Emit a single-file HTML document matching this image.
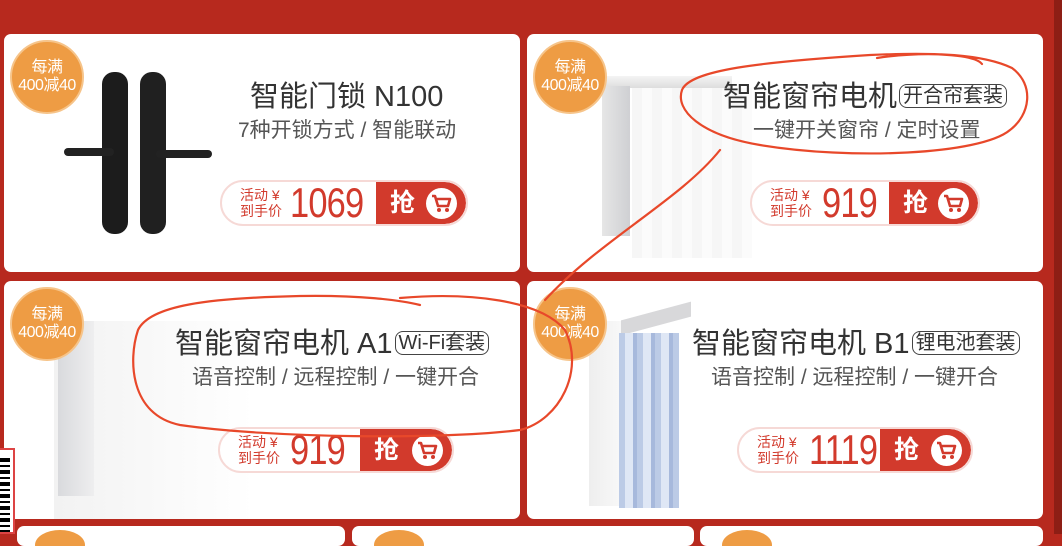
<!DOCTYPE html>
<html><head><meta charset="utf-8"><style>
*{margin:0;padding:0;box-sizing:border-box}
html,body{width:1062px;height:534px}
body{background:#b7291e;position:relative;overflow:hidden;font-family:"Liberation Sans","Noto Sans CJK SC",sans-serif}
.card{position:absolute;background:#fff;border-radius:7px;overflow:hidden}
.badge{position:absolute;width:74px;height:74px;border-radius:50%;background:#ee9c44;color:#fff;text-align:center;font-size:16px;line-height:18px;padding-top:17px;border:2px solid #f6c48a;letter-spacing:-0.5px}
.t{position:absolute;color:#333;font-size:29px;white-space:nowrap;line-height:34px}
.tag{display:inline-block;border:1.5px solid #444;border-radius:8px;font-size:20px;line-height:22px;padding:0 3px;vertical-align:4px;margin-left:2px}
.s{position:absolute;color:#555;font-size:21px;white-space:nowrap;line-height:26px}
.pill{position:absolute;height:46px;border:2px solid #f6d9d6;border-radius:23px;background:#fff;overflow:hidden}
.pill .lab{position:absolute;left:18px;top:5px;color:#d23a2c;font-size:14px;line-height:16px}
.pill .num{position:absolute;top:-1px;color:#d23a2c;font-size:42px;line-height:44px;transform:scaleX(0.82);transform-origin:left;letter-spacing:-1px}
.pill .red{position:absolute;top:0;right:0;bottom:0;background:#d23a2c;border-radius:0 23px 23px 0}
.pill .q{position:absolute;left:14px;top:5px;color:#fff;font-size:25px;font-weight:bold;line-height:32px}
.pill .cart{position:absolute;top:6px;width:31px;height:31px;border-radius:50%;background:#fff}
.cart svg{position:absolute;left:5px;top:6px}
</style></head><body>

<!-- card1 -->
<div class="card" style="left:4px;top:34px;width:516px;height:238px">
 <div style="position:absolute;left:98px;top:38px;width:26px;height:162px;background:#1c1c1c;border-radius:12px"></div>
 <div style="position:absolute;left:60px;top:114px;width:50px;height:8px;background:#222;border-radius:4px"></div>
 <div style="position:absolute;left:136px;top:38px;width:26px;height:162px;background:#202020;border-radius:12px"></div>
 <div style="position:absolute;left:152px;top:116px;width:56px;height:8px;background:#222;border-radius:4px"></div>
 <div class="badge" style="left:6px;top:6px">每满<br>400减40</div>
 <div class="t" style="left:246px;top:46px">智能门锁 N100</div>
 <div class="s" style="left:234px;top:84px">7种开锁方式 / 智能联动</div>
</div>
<div class="pill" style="left:220px;top:180px;width:248px">
 <div class="lab">活动 ¥<br>到手价</div><div class="num" style="left:68px">1069</div>
 <div class="red" style="width:90px"><div class="q">抢</div><div class="cart" style="left:50px"><svg width="21" height="19" viewBox="0 0 21 19"><path d="M1 2h3l3 10h10l2-7H6" fill="none" stroke="#d23a2c" stroke-width="2.6" stroke-linejoin="round"/><circle cx="8" cy="16" r="2" fill="#d23a2c"/><circle cx="16" cy="16" r="2" fill="#d23a2c"/></svg></div></div>
</div>

<!-- card2 -->
<div class="card" style="left:527px;top:34px;width:516px;height:238px">
 <div style="position:absolute;left:75px;top:42px;width:130px;height:12px;background:linear-gradient(#f4f4f4,#ddd)"></div>
 <div style="position:absolute;left:75px;top:52px;width:28px;height:150px;background:linear-gradient(90deg,#e6e6e6,#cfd0d3)"></div>
 <div style="position:absolute;left:105px;top:54px;width:120px;height:170px;background:repeating-linear-gradient(90deg,#f6f6f6 0 10px,#fbfbfb 10px 20px)"></div>
 <div class="badge" style="left:6px;top:6px">每满<br>400减40</div>
 <div class="t" style="left:196px;top:46px">智能窗帘电机<span class="tag">开合帘套装</span></div>
 <div class="s" style="left:226px;top:84px">一键开关窗帘 / 定时设置</div>
</div>
<div class="pill" style="left:750px;top:180px;width:230px">
 <div class="lab">活动 ¥<br>到手价</div><div class="num" style="left:70px">919</div>
 <div class="red" style="width:89px"><div class="q">抢</div><div class="cart" style="left:49px"><svg width="21" height="19" viewBox="0 0 21 19"><path d="M1 2h3l3 10h10l2-7H6" fill="none" stroke="#d23a2c" stroke-width="2.6" stroke-linejoin="round"/><circle cx="8" cy="16" r="2" fill="#d23a2c"/><circle cx="16" cy="16" r="2" fill="#d23a2c"/></svg></div></div>
</div>

<!-- card3 -->
<div class="card" style="left:4px;top:281px;width:516px;height:238px">
 <div style="position:absolute;left:50px;top:40px;width:200px;height:200px;background:linear-gradient(90deg,#f2f2f2,#fafafa 60%,#fff)"></div>
 <div style="position:absolute;left:54px;top:40px;width:36px;height:175px;background:linear-gradient(90deg,#d9dadd,#eeeeef)"></div>
 <div class="badge" style="left:6px;top:6px">每满<br>400减40</div>
 <div class="t" style="left:171px;top:46px">智能窗帘电机 A1<span class="tag">Wi-Fi套装</span></div>
 <div class="s" style="left:188px;top:84px">语音控制 / 远程控制 / 一键开合</div>
</div>
<div class="pill" style="left:218px;top:427px;width:236px">
 <div class="lab">活动 ¥<br>到手价</div><div class="num" style="left:70px">919</div>
 <div class="red" style="width:92px"><div class="q">抢</div><div class="cart" style="left:52px"><svg width="21" height="19" viewBox="0 0 21 19"><path d="M1 2h3l3 10h10l2-7H6" fill="none" stroke="#d23a2c" stroke-width="2.6" stroke-linejoin="round"/><circle cx="8" cy="16" r="2" fill="#d23a2c"/><circle cx="16" cy="16" r="2" fill="#d23a2c"/></svg></div></div>
</div>

<!-- card4 -->
<div class="card" style="left:527px;top:281px;width:516px;height:238px">
 <div style="position:absolute;left:62px;top:40px;width:32px;height:185px;background:linear-gradient(90deg,#eee,#f8f8f8)"></div>
 <div style="position:absolute;left:94px;top:30px;width:70px;height:15px;background:#d8d8da;transform:skewY(-15deg)"></div>
 <div style="position:absolute;left:92px;top:52px;width:60px;height:175px;background:repeating-linear-gradient(90deg,#bccbe6 0 6px,#dfe7f5 6px 14px,#a7b9dc 14px 18px)"></div>
 <div class="badge" style="left:6px;top:6px">每满<br>400减40</div>
 <div class="t" style="left:165px;top:46px">智能窗帘电机 B1<span class="tag">锂电池套装</span></div>
 <div class="s" style="left:184px;top:84px">语音控制 / 远程控制 / 一键开合</div>
</div>
<div class="pill" style="left:737px;top:427px;width:236px">
 <div class="lab">活动 ¥<br>到手价</div><div class="num" style="left:70px">1119</div>
 <div class="red" style="width:91px"><div class="q">抢</div><div class="cart" style="left:51px"><svg width="21" height="19" viewBox="0 0 21 19"><path d="M1 2h3l3 10h10l2-7H6" fill="none" stroke="#d23a2c" stroke-width="2.6" stroke-linejoin="round"/><circle cx="8" cy="16" r="2" fill="#d23a2c"/><circle cx="16" cy="16" r="2" fill="#d23a2c"/></svg></div></div>
</div>

<!-- bottom row -->
<div class="card" style="left:17px;top:526px;width:328px;height:20px"><div style="position:absolute;left:18px;top:4px;width:50px;height:30px;border-radius:50%;background:#ee9c44"></div></div>
<div class="card" style="left:352px;top:526px;width:342px;height:20px"><div style="position:absolute;left:22px;top:4px;width:50px;height:30px;border-radius:50%;background:#ee9c44"></div></div>
<div class="card" style="left:700px;top:526px;width:343px;height:20px"><div style="position:absolute;left:22px;top:4px;width:50px;height:30px;border-radius:50%;background:#ee9c44"></div></div>
<div style="position:absolute;left:1054px;top:0;width:8px;height:534px;background:#8d1e15"></div>
<div style="position:absolute;left:0;top:448px;width:15px;height:86px;background:#fff;border:2px solid #d44;border-left:none"></div>
<div style="position:absolute;left:0;top:458px;width:10px;height:74px;background:repeating-linear-gradient(#000 0 4px,#fff 4px 7px,#000 7px 9px,#fff 9px 12px)"></div>

<!-- annotations -->
<svg style="position:absolute;left:0;top:0" width="1062" height="534">
<g fill="none" stroke="#e8482a" stroke-width="2.2" stroke-linecap="round">
<path d="M877,58 C930,50 985,55 1012,68 C1035,85 1030,115 1010,130 C980,155 850,160 760,145 C700,135 675,110 682,90 C690,70 760,62 870,55 C940,52 975,55 982,64"/>
<path d="M720,150 C680,200 600,240 545,300"/>
<path d="M400,298 C470,292 540,300 565,330 C585,370 560,420 520,430 C440,440 270,438 180,425 C130,415 128,360 138,330 C150,305 210,298 300,296 C360,295 400,300 420,305"/>
</g></svg>
</body></html>
